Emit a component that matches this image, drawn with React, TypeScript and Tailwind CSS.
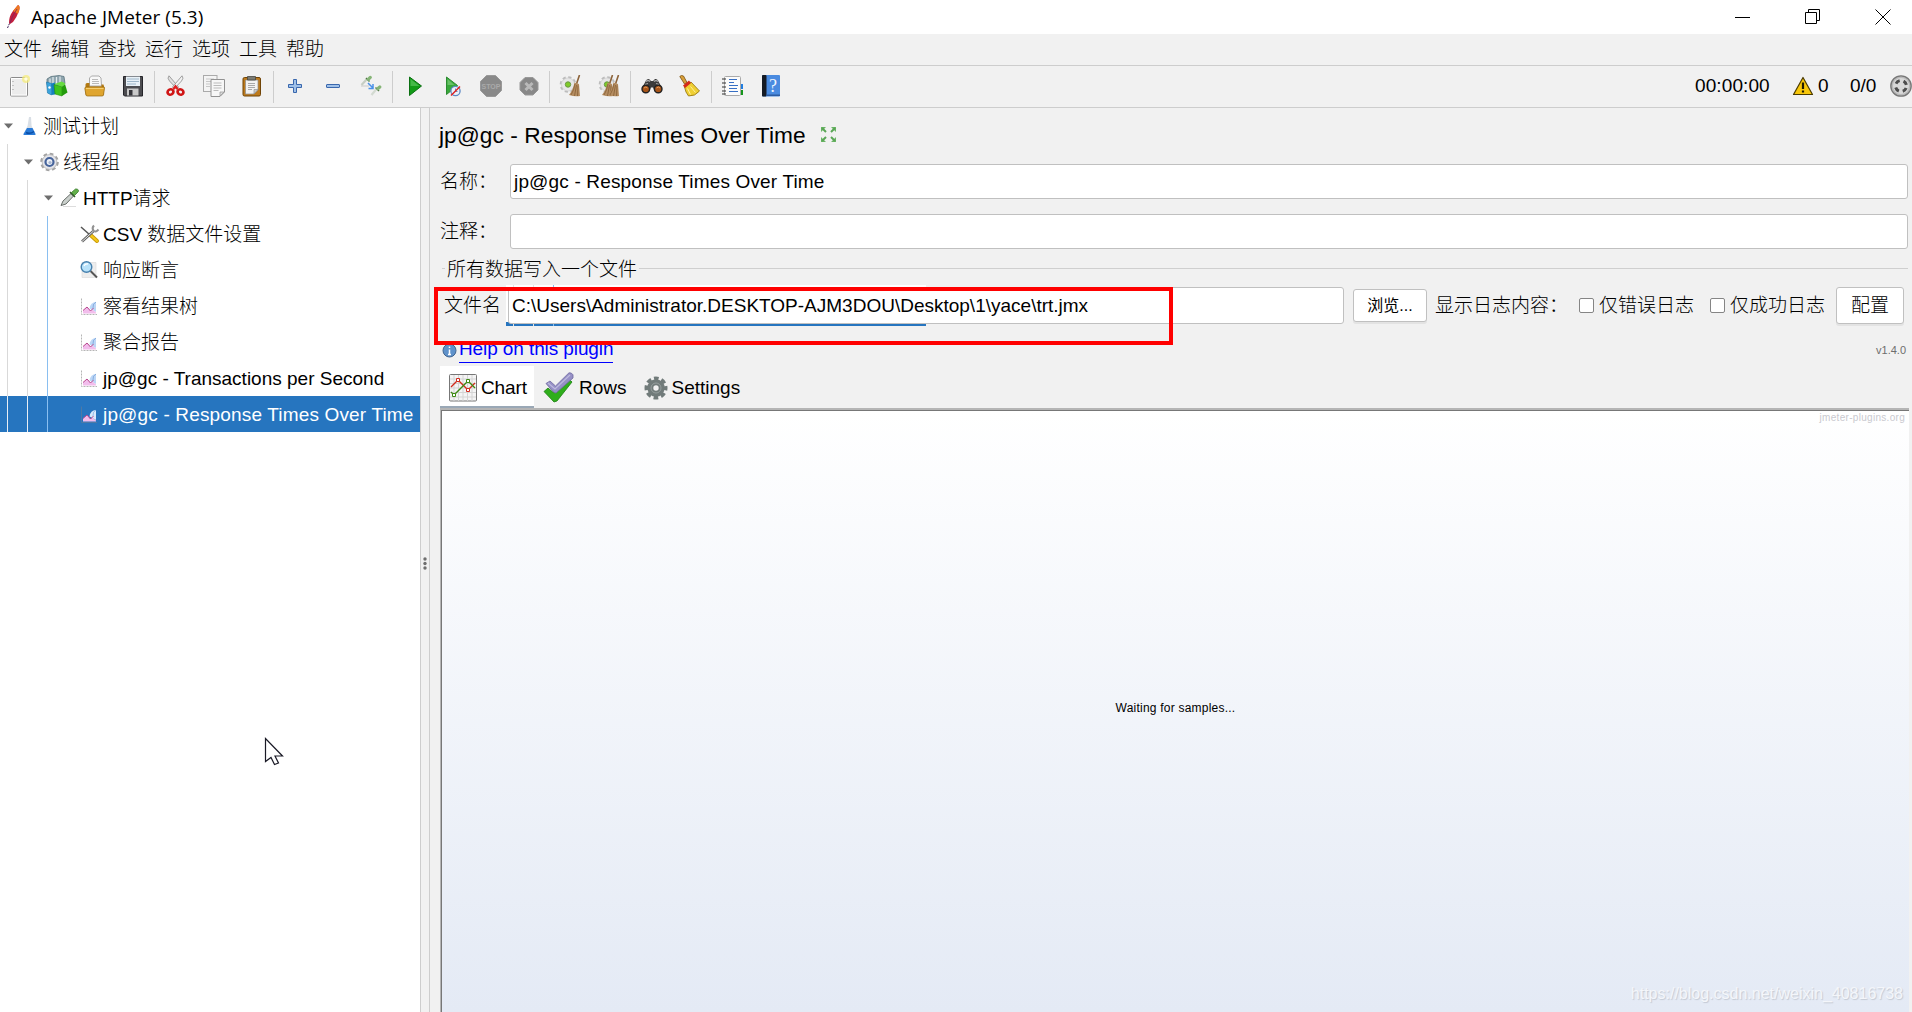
import type { ReactNode } from "react";

const menus = ["文件", "编辑", "查找", "运行", "选项", "工具", "帮助"];

function Svg({ w = 22, h = 22, className = "", children }: { w?: number; h?: number; className?: string; children: ReactNode }) {
  return (
    <svg width={w} height={h} viewBox={`0 0 ${w} ${h}`} className={`block shrink-0 ${className}`} fill="none" aria-hidden="true">
      {children}
    </svg>
  );
}

/* ---------- toolbar icons (22 x 22) ---------- */

const NewIcon = () => (
  <Svg>
    <rect x="2.5" y="2.5" width="17" height="18.5" rx="1" fill="#ececec" stroke="#8b8b8b" />
    <rect x="3.5" y="3.5" width="15" height="16.5" stroke="#fff" />
    <path d="M5 6v1M5 10v1M5 14v1" stroke="#999" />
    <circle cx="18" cy="4" r="4" fill="#f6ec7a" opacity=".75" />
    <circle cx="18" cy="4" r="1.8" fill="#fffde0" />
  </Svg>
);

const TemplatesIcon = () => (
  <Svg>
    <path d="M1 4l4-2.500 4-.5 4-.5 5 1 1 7-7 4-11-3z" fill="#8fa5ae" stroke="#4e6873" strokeWidth=".7" />
    <path d="M4 3.500v6M7 2v7M10.500 2v7M14 1.500v7" stroke="#e3ecef" strokeWidth="1.200" />
    <path d="M.5 7l5 1.500V20l-4-2z" fill="#3ba3dc" stroke="#1774a8" strokeWidth=".6" />
    <path d="M5.500 8.500l3.500-1v12L5.500 20z" fill="#1580c0" />
    <path d="M8 9.500l8 2v9.500l-7-2z" fill="#3fc41c" stroke="#228c0c" strokeWidth=".6" />
    <path d="M16 11.500l3-2.500 2.500 8.500L16 21z" fill="#249b0c" />
    <path d="M8.500 9l7-2.500 4 2-3.500 3z" fill="#67dc40" />
    <circle cx="3.500" cy="12.500" r="1.200" fill="#fff" />
  </Svg>
);

const OpenIcon = () => (
  <Svg>
    <path d="M5.500 3l2-2H15l2 2 .5 8h-12z" fill="#f8f8f8" stroke="#999" strokeWidth=".8" />
    <path d="M8 4.500h6M8 6.500h7M8 8.500h7" stroke="#aaa" strokeWidth=".8" />
    <path d="M1.500 9.500q0-1.500 1.500-1.500h2.500v3.500h12V9.500h2l.8 3-.8 8H3q-1.500 0-1.500-1.500z" fill="#b27912" />
    <path d="M.8 13.500q0-1.500 1.500-1.500h17q1.500 0 1.200 1.200L19.500 20q-.4 1-1.500 1H3.500q-1.300 0-1.500-1z" fill="#dfa52f" stroke="#96670e" strokeWidth=".7" />
    <path d="M2 13.500h17.500" stroke="#f5cd70" />
  </Svg>
);

const SaveIcon = () => (
  <Svg>
    <path d="M1.500 1.500h19v19.500h-18l-1-1z" fill="#4c4c50" stroke="#25252a" />
    <path d="M4 1.500h14v9.500H4z" fill="#e9f1f7" />
    <path d="M5 4h12M5 6.500h12M5 9h9" stroke="#9eb6c9" />
    <path d="M5 13.500h11.500v7H5z" fill="#c9c9c9" />
    <path d="M7 15h3.500v5.500H7z" fill="#35353a" />
  </Svg>
);

const CutIcon = () => (
  <Svg>
    <path d="M4 .8Q1.800 3 4.500 6l7.500 8 1.500-2z" fill="#e2e2e2" stroke="#8a8a8a" strokeWidth=".8" />
    <path d="M17 .8q2.200 2.200-.5 5.200L9 14l-1.500-2z" fill="#f3f3f3" stroke="#8a8a8a" strokeWidth=".8" />
    <path d="M8.500 14l2-2.500 2 2.500" stroke="#e02020" strokeWidth="2.400" />
    <ellipse cx="5.500" cy="17" rx="3" ry="2.600" transform="rotate(-25 5.500 17)" stroke="#d01515" strokeWidth="2.700" />
    <ellipse cx="15.500" cy="17" rx="3" ry="2.600" transform="rotate(25 15.500 17)" stroke="#d01515" strokeWidth="2.700" />
  </Svg>
);

const CopyIcon = () => (
  <Svg>
    <rect x=".5" y=".5" width="13.500" height="16" fill="#f4f4f4" stroke="#aaa" />
    <path d="M3 4h8M3 6.500h5M3 9h4M3 11.500h4" stroke="#c8c8c8" />
    <path d="M8 4.500h13.500V17L17 21.500H8z" fill="#f7f7f7" stroke="#929292" />
    <path d="M10.500 8h8M10.500 10.500h8M10.500 13h8M10.500 15.500h5" stroke="#bbb" />
    <path d="M21 17h-4v4z" fill="#ddd" stroke="#929292" strokeWidth=".7" />
  </Svg>
);

const PasteIcon = () => (
  <Svg>
    <rect x="2" y="2.500" width="17.500" height="18.500" rx="1.500" fill="#bd7a1c" stroke="#704407" />
    <path d="M4.500 5H17v9.500L13 19H4.500z" fill="#f2f2f2" stroke="#8d8d8d" strokeWidth=".7" />
    <path d="M6.500 1.500h8v3.500h-8z" fill="#7b7b74" stroke="#484840" strokeWidth=".8" />
    <path d="M7 8.500h7M7 10.500h7M7 12.500h7M7 14.500h4" stroke="#a9a9a9" />
    <path d="M17 14.500h-4V19z" fill="#ccc" stroke="#888" strokeWidth=".6" />
  </Svg>
);

const PlusIcon = () => (
  <Svg>
    <path d="M9.500 4.500h3v5h5v3h-5v5h-3v-5h-5v-3h5z" fill="#9fc0e8" stroke="#3967ad" />
  </Svg>
);

const MinusIcon = () => (
  <Svg>
    <rect x="4.500" y="9.500" width="13" height="3" rx=".5" fill="#9fc0e8" stroke="#3967ad" />
  </Svg>
);

const ToggleIcon = () => (
  <Svg>
    <path d="M1 11h8" stroke="#c9c9c9" />
    <path d="M1.500 10l5-5.500" stroke="#c6cec4" strokeWidth="2.200" />
    <path d="M6 3l3.500 3.500" stroke="#4f7a44" strokeWidth="1.400" />
    <path d="M8.500 4.200l1.800-1.800" stroke="#86b577" strokeWidth="3.200" strokeLinecap="round" />
    <path d="M8 8l4.500 4.500M13 9v4.500H8.500" stroke="#4a90e8" strokeWidth="1.500" />
    <path d="M11.500 20l4.500-5.500" stroke="#d3dad1" strokeWidth="2.200" />
    <path d="M15.500 12.500l3.500 3.500" stroke="#4f7a44" strokeWidth="1.400" />
    <path d="M18 13.500l1.800-1.500" stroke="#86b577" strokeWidth="3.200" strokeLinecap="round" />
  </Svg>
);

const StartIcon = () => (
  <Svg>
    <path d="M5.500 2v18.500L17.500 11z" fill="#129b17" stroke="#0b7012" />
    <path d="M6.500 4v7h9z" fill="#45b948" />
  </Svg>
);

const StartNoPauseIcon = () => (
  <Svg>
    <path d="M4.500 2v17.500L15.500 10.500z" fill="#38a83b" stroke="#2c8b31" />
    <path d="M5.500 4v6h7z" fill="#68c067" />
    <circle cx="13.500" cy="16" r="4.600" fill="#edf2fa" stroke="#5d8ac6" strokeWidth="1.300" />
    <path d="M13.500 13.500v3h2" stroke="#668abb" />
    <path d="M9 20.500l9-9" stroke="#e02020" strokeWidth="1.400" />
  </Svg>
);

const StopIcon = () => (
  <Svg>
    <path d="M6.500.5h9l6 6v9l-6 6h-9l-6-6v-9z" fill="#898989" stroke="#999" />
    <text x="11" y="14" textAnchor="middle" fill="#aaa" fontFamily="Liberation Sans, sans-serif" fontWeight="700" fontSize="7">
      STOP
    </text>
  </Svg>
);

const ShutdownIcon = () => (
  <Svg>
    <path d="M7 2.500h8l5 5v7.500l-5 5H7l-5-5V7.500z" fill="#888" stroke="#999" />
    <path d="M7.500 8l7 7M14.500 8l-7 7" stroke="#b9b9b9" strokeWidth="3" />
  </Svg>
);

function Broom({ x }: { x: number }) {
  return (
    <g transform={`translate(${x} 0)`}>
      <path d="M8.500 0L5.500 9" stroke="#8c6239" strokeWidth="1.600" />
      <path d="M3.500 7.500L8 9l1 12q-5 1-11-1 4-5 5.500-12.500z" fill="#b58d61" />
      <path d="M4 9Q3 15 0 20M5.500 10l-2 11M7 10.500l-.5 10.500" stroke="#80592f" strokeWidth=".7" />
    </g>
  );
}

const ClearIcon = ({ all = false }: { all?: boolean }) => (
  <Svg>
    <circle cx="9" cy="9.500" r="6.800" stroke="#bcbcbc" strokeWidth="3" strokeDasharray="3 2.340" />
    <circle cx="9" cy="9.500" r="6.600" fill="#e6e6e6" stroke="#c8c8c8" strokeWidth=".6" />
    <circle cx="9" cy="9.500" r="2.700" fill="#7ecb28" stroke="#6a9944" />
    {all && <Broom x={6} />}
    <Broom x={12} />
  </Svg>
);

const SearchIcon = () => (
  <Svg>
    <path d="M1 13L5 5.500q1-2 3-1.500l2 2h2l2-2q2-.5 3 1.500l4 7.500-1 4h-6l-2-4.500h-2L8 17H2z" fill="#3b3b3b" />
    <path d="M5 6.500q2-2 4 0M13 6.500q2-2 4 0M4 9.500l3-1M15 8.500l3 1" stroke="#aaa" strokeWidth="1.200" />
    <circle cx="4.800" cy="14" r="3.800" fill="#a75418" stroke="#222" strokeWidth="1.400" />
    <circle cx="17.200" cy="14" r="3.800" fill="#a75418" stroke="#222" strokeWidth="1.400" />
    <path d="M3 13q2-2 3.500 0M15.500 13q2-2 3.500 0" stroke="#e39b5b" />
  </Svg>
);

const ResetIcon = () => (
  <Svg>
    <path d="M.8 1.500q1.500-1.800 3.700-.5L8 7.500 5.500 9z" fill="#d8a03a" stroke="#7a4f0e" strokeWidth=".8" />
    <path d="M5.500 12l6.500-5 8.500 9q-4.500 5.500-11 5-3-3.500-4-9z" fill="#efcf33" stroke="#8f700a" strokeWidth=".8" />
    <path d="M4 10.500l6-5 2 2.500-6 5z" fill="#d42a17" />
    <path d="M8.500 13.500l3 6M11.500 11.500l5 6" stroke="#fff09b" />
  </Svg>
);

const FunctionIcon = () => (
  <Svg>
    <rect x="17" y="9" width="4" height="5" fill="#1f7de0" />
    <rect x="17" y="15" width="4" height="5" fill="#15961b" />
    <rect x="2.500" y="1.500" width="16" height="19" rx="1" fill="#fbfbfb" stroke="#aaa" />
    <path d="M0 4h4M0 8h4M0 12h4M0 16h4M0 19h4" stroke="#333" strokeWidth="1.200" />
    <path d="M7 4.500h8M7 7.500h5M7 10.500h9M7 13.500h8M7 16.500h9" stroke="#376fc4" />
  </Svg>
);

const HelpIcon = () => (
  <Svg>
    <rect x="2" y="0" width="18" height="21.500" rx="1" fill="#4a8be0" />
    <rect x="2" y="0" width="4.500" height="21.500" rx="1" fill="#151b24" />
    <path d="M6.500 19.500H20V21H6.500z" fill="#2d5ca2" />
    <text x="13" y="17" textAnchor="middle" fill="#eef5ff" fontFamily="Liberation Serif, serif" fontSize="18">
      ?
    </text>
  </Svg>
);

/* ---------- tree icons (20 x 20) ---------- */

const FlaskIcon = () => (
  <Svg w={20} h={20}>
    <path d="M9 1h2l.6 9 4 8q.3 1-.8 1H4.200q-1 0-.7-1l4-8z" fill="#d9dfe6" />
    <path d="M7 12h5.500l3 6q.3 1-.8 1H4.200q-1 0-.7-1z" fill="#2a7bd8" />
    <path d="M6 16.500q4 2 8-1" stroke="#0b4ea6" strokeWidth="1.500" />
  </Svg>
);

const ThreadGroupIcon = () => (
  <Svg w={20} h={20}>
    <circle cx="9.500" cy="10" r="8" stroke="#a3a3a3" strokeWidth="2.600" strokeDasharray="3.600 2.680" />
    <circle cx="9.500" cy="10" r="7.400" fill="#e4e4e8" stroke="#aaa" strokeWidth=".7" />
    <circle cx="9.500" cy="10" r="4" fill="#eef1f6" stroke="#45639b" strokeWidth="2.200" />
    <circle cx="10" cy="10.500" r="1.600" fill="#a9b8d2" />
  </Svg>
);

const SamplerIcon = () => (
  <Svg w={20} h={20}>
    <path d="M3 18.500h13" stroke="#ddd" />
    <path d="M1 17.500l2-4.500 8-7.500 2.500 2.500L6 16z" fill="#c9cfcb" stroke="#59605b" strokeWidth=".9" />
    <path d="M10 4l5 5" stroke="#355d2b" strokeWidth="1.600" />
    <path d="M11.500 4.500L15.500 1q2.500-.5 3 1.500 0 1-.5 1.500l-3.500 3.500z" fill="#62b04a" stroke="#3a7a2b" strokeWidth=".8" />
  </Svg>
);

const ConfigIcon = () => (
  <Svg w={20} h={20}>
    <path d="M1 3l9 8" stroke="#555" strokeWidth="1.500" />
    <path d="M10.500 11l6.500 6" stroke="#c99a06" strokeWidth="4" strokeLinecap="round" />
    <path d="M10.500 11l6.500 6" stroke="#f4c71a" strokeWidth="2.200" strokeLinecap="round" />
    <path d="M2 17.500L13.500 7" stroke="#666" strokeWidth="2.800" />
    <path d="M2 17.500L13.500 7" stroke="#e2e2e2" />
    <path d="M14 1.500q-2.500 2.500-.5 5t5-1" stroke="#929292" strokeWidth="2" />
  </Svg>
);

const AssertionIcon = () => (
  <Svg w={20} h={20}>
    <path d="M2 2.500h14v15H2z" fill="#ededed" stroke="#ddd" strokeWidth=".7" />
    <path d="M10.500 11l6.500 6.500" stroke="#555" strokeWidth="2" />
    <circle cx="6.500" cy="7" r="5.300" fill="#b8e2fa" stroke="#4680ae" strokeWidth="1.400" />
    <path d="M4 6q1-2.500 4-2" stroke="#fff" strokeWidth="1.300" />
  </Svg>
);

const ListenerIcon = ({ selected = false }: { selected?: boolean }) => (
  <Svg w={20} h={20}>
    <path d="M1.500 2.500v16H17" stroke={selected ? "#4d79a5" : "#b5b5b5"} strokeDasharray={selected ? undefined : "2 1"} />
    <path d="M9.500 12.500q1-6.500 6.500-6.500v10z" fill={selected ? "#d8eafc" : "#bcd6f6"} />
    <path d="M3 17.500v-3l4-3.500 3.500 4 2-1.500 3.500 3v1z" fill="#f2bdec" />
    <path d="M3 14.500l4-3.500 3.500 4 3-3" stroke="#b8468c" />
    <path d="M13 12q-.5-4.500 3-6" stroke={selected ? "#8fb9e6" : "#7fa8dc"} strokeWidth=".9" />
  </Svg>
);

/* ---------- tree ---------- */

type Node = { label: string; depth: number; icon: ReactNode; open?: boolean; selected?: boolean };

const nodes: Node[] = [
  { label: "测试计划", depth: 0, icon: <FlaskIcon />, open: true },
  { label: "线程组", depth: 1, icon: <ThreadGroupIcon />, open: true },
  { label: "HTTP请求", depth: 2, icon: <SamplerIcon />, open: true },
  { label: "CSV 数据文件设置", depth: 3, icon: <ConfigIcon /> },
  { label: "响应断言", depth: 3, icon: <AssertionIcon /> },
  { label: "察看结果树", depth: 3, icon: <ListenerIcon /> },
  { label: "聚合报告", depth: 3, icon: <ListenerIcon /> },
  { label: "jp@gc - Transactions per Second", depth: 3, icon: <ListenerIcon /> },
  { label: "jp@gc - Response Times Over Time", depth: 3, icon: <ListenerIcon selected />, selected: true },
];

function TreeRow({ node }: { node: Node }) {
  return (
    <div className={`flex h-9 items-center whitespace-pre ${node.selected ? "bg-[#2675bf] tracking-[0.16px] text-white" : ""}`}>
      {Array.from({ length: node.depth }, (_, i) => (
        <span key={i} className="flex h-full w-5 shrink-0 pl-[7px]">
          <span className={`w-px ${i === 2 ? "bg-[#8abff0]" : node.selected ? "bg-[#e8eef5]" : "bg-[#d9d9d9]"}`} />
        </span>
      ))}
      <span className="flex w-5 shrink-0 pl-[4px]">
        {node.open && (
          <Svg w={9} h={6}>
            <path d="M0 .5h9L4.500 5.500z" fill="#6e6e6e" />
          </Svg>
        )}
      </span>
      <span className="w-[23px] shrink-0">{node.icon}</span>
      <span className="pt-[2px]">{node.label}</span>
    </div>
  );
}

/* ---------- toolbar ---------- */

const toolGroups: { gap: string; icons: ReactNode[] }[] = [
  { gap: "w-[154px] pl-2 gap-4", icons: [<NewIcon />, <TemplatesIcon />, <OpenIcon />, <SaveIcon />] },
  { gap: "w-[118px] pl-[10px] gap-[16px]", icons: [<CutIcon />, <CopyIcon />, <PasteIcon />] },
  { gap: "w-[118px] pl-[10px] gap-4", icons: [<PlusIcon />, <MinusIcon />, <ToggleIcon />] },
  { gap: "w-[156px] pl-[11px] gap-4", icons: [<StartIcon />, <StartNoPauseIcon />, <StopIcon />, <ShutdownIcon />] },
  { gap: "w-20 pl-[9px] gap-[17px]", icons: [<ClearIcon />, <ClearIcon all />] },
  { gap: "w-20 pl-[10px] gap-4", icons: [<SearchIcon />, <ResetIcon />] },
  { gap: "w-20 pl-[10px] gap-4", icons: [<FunctionIcon />, <HelpIcon />] },
];

function Toolbar() {
  return (
    <div className="flex h-[43px] items-center border-y border-[#cdcdcd] bg-[#f1f1f1]">
      {toolGroups.map((group, i) => (
        <div key={i} className="flex items-center">
          {i > 0 && <span className="h-8 w-px bg-[#cdcdcd]" />}
          <div className={`flex items-center pb-[2px] ${group.gap}`}>
            {group.icons.map((icon, j) => (
              <span key={j}>{icon}</span>
            ))}
          </div>
        </div>
      ))}
      <div className="ml-auto flex items-center pb-px">
        <span className="w-[97px] tracking-[0.1px]">00:00:00</span>
        <Svg w={22} h={20}>
          <path d="M11 1.500L20.500 18.500h-19z" fill="#f8c70a" stroke="#4b3b00" strokeWidth="1.200" strokeLinejoin="round" />
          <path d="M11 6.500v6.500M11 14.500v2" stroke="#211a00" strokeWidth="2.200" />
        </Svg>
        <span className="w-9 pl-[4px]">0</span>
        <span className="w-[40px]">0/0</span>
        <Svg>
          <circle cx="11" cy="11" r="10.200" fill="#b9b9b9" stroke="#777" strokeWidth="1.300" />
          <circle cx="11" cy="11" r="8" fill="#d9d9d9" />
          <circle cx="11" cy="11" r="5.500" stroke="#4d4d4d" strokeWidth="3" strokeDasharray="4.600 4.040" strokeDashoffset="-2" />
        </Svg>
      </div>
    </div>
  );
}

function TitleBar() {
  return (
    <div className="flex h-[34px] items-center bg-white">
      <Svg w={22} h={26} className="ml-[5px]">
        <path d="M2.500 24L6 16" stroke="#3c2157" strokeDasharray="2 1" />
        <path d="M4 19q0-7 4-12l5-6q2.500 1 1 6-2 6-6 11l-3 2z" fill="#c3203d" />
        <path d="M8 7l5-6q2.500 1 1 6l-1 3z" fill="#ee7a20" />
        <path d="M5 19q2-7 7-14" stroke="#7d2262" strokeWidth=".8" />
      </Svg>
      <span className="ml-[4px] font-['Open_Sans','Noto_Sans',sans-serif] text-[19px] font-normal tracking-[0.05px]">Apache JMeter (5.3)</span>
      <div className="ml-auto flex items-center gap-[54px] pr-[21px]">
        <Svg w={16} h={16}>
          <path d="M0 8.500h15" stroke="#000" />
        </Svg>
        <Svg w={16} h={16}>
          <path d="M.5 3.500h11v11H.5zM3.500 3.500V.5h11v11h-3" stroke="#000" />
        </Svg>
        <Svg w={16} h={16}>
          <path d="M.5.5l15 15M15.500.5l-15 15" stroke="#000" />
        </Svg>
      </div>
    </div>
  );
}

/* ---------- right panel ---------- */

function CheckOption({ label }: { label: string }) {
  return (
    <label className="flex items-center gap-[5px]">
      <span className="size-[15px] rounded-[2px] border border-[#858585] bg-white" />
      <span>{label}</span>
    </label>
  );
}

function FileRow() {
  return (
    <div className="relative mt-[7px] flex h-[37px] items-center pl-[14px]">
      <span className="w-[64px]">文件名</span>
      {/* leftover repaint strips of the selected tree row */}
      <div className="absolute left-[76px] top-[-2px] h-[41px] w-[420px] border-b-[4px] border-[#2675bf] bg-white">
        <span className="absolute left-[7px] h-[41px] w-px bg-[#e4e4e4]" />
        <span className="absolute left-[27px] h-[41px] w-px bg-[#e4e4e4]" />
        <span className="absolute left-[47px] h-[41px] w-px bg-[#8abff0]" />
      </div>
      <div className="relative flex h-[37px] w-[836px] items-center rounded-[3px] border border-[#c0c0c0] bg-white pl-[3px]">
        C:\Users\Administrator.DESKTOP-AJM3DOU\Desktop\1\yace\trt.jmx
      </div>
      <button className="ml-[9px] h-[33px] w-[74px] rounded-[3px] border border-[#c0c0c0] bg-white text-base font-normal shadow-[0_2px_0_#e3e3e3]">浏览...</button>
      <span className="ml-[8px] w-[144px]">显示日志内容：</span>
      <CheckOption label="仅错误日志" />
      <span className="w-4" />
      <CheckOption label="仅成功日志" />
      <button className="ml-[11px] h-[37px] w-[68px] rounded-[3px] border border-[#c0c0c0] bg-white shadow-[0_2px_0_#e3e3e3]">配置</button>
      <div className="absolute left-[4px] top-0 h-[58px] w-[739px] border-4 border-[#ff0000]" />
    </div>
  );
}

function Tabs() {
  return (
    <div className="flex h-[43px] pl-[10px]">
      <div className="flex w-[94px] items-center border-b-[3px] border-[#9aa8b6] bg-white pl-[9px] pt-[3px]">
        <Svg w={28} h={28}>
          <rect x=".5" y=".5" width="27" height="26.500" rx="1" fill="#f4f4f4" stroke="#777" />
          <path d="M5 1v26M9.500 1v26M14 1v26M18.500 1v26M23 1v26M1 5h26M1 9.500h26M1 14h26M1 18.500h26M1 23h26" stroke="#d4d4d4" />
          <path d="M2 13l7-7 10 10 7-7" stroke="#d02a1c" strokeWidth="1.300" />
          <path d="M2 18l3 3L19 7l7 7" stroke="#3d8a12" strokeWidth="1.300" />
          <path d="M7.500 4.500h3v3h-3zM17.500 14.500h3v3h-3z" fill="#fff" stroke="#d02a1c" />
          <path d="M3.500 19.500h3v3h-3zM17.500 5.500h3v3h-3z" fill="#fff" stroke="#3d8a12" />
        </Svg>
        <span className="pl-[4px] tracking-[-0.1px]">Chart</span>
      </div>
      <div className="flex items-center pl-[9px]">
        <Svg w={31} h={31}>
          <path d="M1 19.500L5 16l6 5L25 6l4 4-15 19-3 1z" fill="#2fae1b" stroke="#1c8010" strokeWidth=".8" />
          <path d="M3 11.500L7 9l5.500 5L26 .8q2.500-.5 4 2V6L13 21q-1.500 0-2.500-1z" fill="#9690c6" stroke="#6e689f" strokeWidth=".8" />
          <path d="M5 11l7 6L27 3" stroke="#bdb9de" strokeWidth="1.300" />
        </Svg>
        <span className="pl-[5px]">Rows</span>
      </div>
      <div className="flex items-center pl-[17px]">
        <Svg w={24} h={24}>
          <circle cx="12" cy="12" r="9.600" stroke="#717b7a" strokeWidth="3.800" strokeDasharray="4.600 2.940" strokeDashoffset="2.300" />
          <circle cx="12" cy="12" r="5.700" fill="#f1f1f1" stroke="#717b7a" strokeWidth="6" />
          <circle cx="12" cy="12" r="5" stroke="#959e9d" />
        </Svg>
        <span className="pl-[4px]">Settings</span>
      </div>
    </div>
  );
}

function Field({ label, value = "" }: { label: string; value?: string }) {
  return (
    <div className="flex h-[35px] items-center pl-[10px] pr-[4px]">
      <span className="w-[70px] shrink-0 pt-px">{label}</span>
      <div className="flex h-full flex-1 items-center rounded-[3px] border border-[#c0c0c0] bg-white pl-[3px] tracking-[0.16px]">{value}</div>
    </div>
  );
}

function Panel() {
  return (
    <main className="flex min-w-0 flex-1 flex-col whitespace-nowrap bg-[#f1f1f1]">
      <div className="flex h-[56px] items-center pb-[3px] pl-[9px]">
        <h1 className="text-[22.700px] tracking-[0.06px]">jp@gc - Response Times Over Time</h1>
        <Svg w={17} h={17} className="ml-[14px]">
          <path d="M1 6V1h5zM11 1h5v5zM1 11v5h5zM16 11v5h-5z" fill="#6bb566" />
          <path d="M2 2l4 4M15 2l-4 4M2 15l4-4M15 15l-4-4" stroke="#5aa656" strokeWidth="2" />
        </Svg>
      </div>
      <Field label="名称：" value="jp@gc - Response Times Over Time" />
      <div className="h-[15px]" />
      <Field label="注释：" />
      <div className="mt-[8px] flex h-[23px] items-center pl-[12px] pr-[4px]">
        <span className="h-px w-[3px] bg-[#cfcfcf]" />
        <span className="px-[2px] pt-[2px]">所有数据写入一个文件</span>
        <span className="h-px flex-1 bg-[#cfcfcf]" />
      </div>
      <FileRow />
      <div className="flex h-[42px] items-end pb-[3px] pl-[12px] pr-[6px]">
        <Svg w={15} h={15} className="mb-[5px]">
          <circle cx="7.500" cy="7.500" r="6.500" fill="#5f92cb" stroke="#41648f" />
          <path d="M7.500 3.500v1.500M7.500 6.500v5M6 11.500h3" stroke="#fff" strokeWidth="1.500" />
        </Svg>
        <a className="ml-[2px] border-b border-[#0000ff] pb-px leading-6 tracking-[-0.1px] text-[#0000ff]">Help on this plugin</a>
        <span className="ml-auto self-end pb-[7px] text-[11px] leading-3 text-[#6e6e6e]">v1.4.0</span>
      </div>
      <Tabs />
      <div className="-mt-px ml-[10px] mr-[3px] flex flex-1 flex-col border-l border-t-2 border-[#b5b5b5]">
        <div className="relative flex flex-1 items-center justify-center border-l border-t border-[#777] bg-gradient-to-b from-white to-[#e4eaf5] text-xs">
          <span className="absolute right-[4px] top-px text-[10px] leading-3 tracking-[0.3px] text-[#c9c9cf]">jmeter-plugins.org</span>
          <span className="relative top-[-4px] tracking-[0.22px]">Waiting for samples...</span>
          <span className="absolute bottom-[8px] right-[6px] text-base leading-5 text-[#f4f6fa] [text-shadow:1px_1px_1px_#c3c9d3]">
            https://blog.csdn.net/weixin_40816738
          </span>
        </div>
      </div>
    </main>
  );
}

export default function App() {
  return (
    <div className="relative flex h-[1012px] w-[1912px] flex-col overflow-hidden bg-white font-['Liberation_Sans','Noto_Sans_CJK_SC',sans-serif] text-[19px] font-light leading-6 text-black">
      <TitleBar />
      <nav className="flex h-[31px] items-center gap-[9px] bg-[#f1f1f1] pl-[4px] pt-px">
        {menus.map((menu) => (
          <span key={menu}>{menu}</span>
        ))}
      </nav>
      <Toolbar />
      <div className="flex min-h-0 flex-1">
        <aside className="w-[420px] shrink-0 bg-white">
          {nodes.map((node) => (
            <TreeRow key={node.label} node={node} />
          ))}
        </aside>
        <div className="flex w-[10px] shrink-0 flex-col items-center border-x border-[#cdcdcd] bg-[#f1f1f1] pt-[449px]">
          <Svg w={4} h={13}>
            <circle cx="2" cy="2" r="1.700" fill="#6e6e6e" />
            <circle cx="2" cy="6.500" r="1.700" fill="#6e6e6e" />
            <circle cx="2" cy="11" r="1.700" fill="#6e6e6e" />
          </Svg>
        </div>
        <Panel />
      </div>
      <Svg w={20} h={29} className="absolute left-[264px] top-[737px]">
        <path d="M1.500 1.500v23l5.500-4 3.500 7 4-1.500-3.500-7h7.500z" fill="#fff" stroke="#1a1a26" strokeWidth="1.200" />
      </Svg>
    </div>
  );
}
